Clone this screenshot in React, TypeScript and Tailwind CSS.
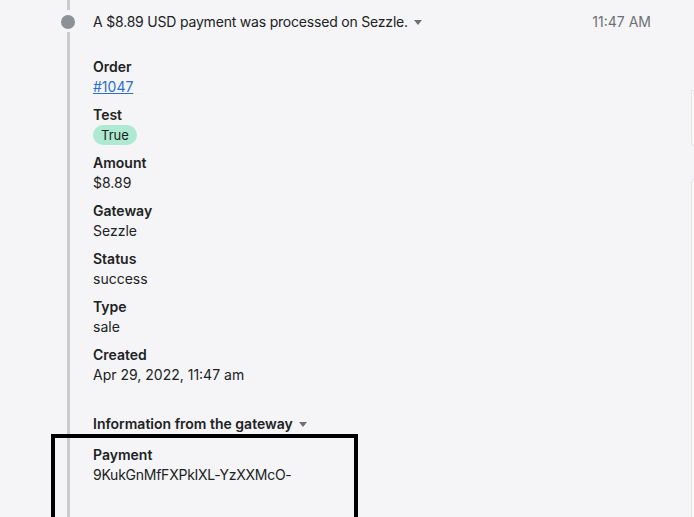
import React from 'react';

interface Field {
  label: string;
  value: React.ReactNode;
}

function Caret() {
  return (
    <svg width="8" height="5" viewBox="0 0 8 5" className="ml-[6px] inline-block">
      <path d="M0 0h8L4 5z" fill="#6d7175" />
    </svg>
  );
}

function App() {
  const fields: Field[] = [
    {
      label: 'Order',
      value: <a href="#" className="text-[#2c6ecb] underline">#1047</a>,
    },
    {
      label: 'Test',
      value: (
        <span className="inline-flex h-5 items-center rounded-full bg-[#aee9d1] px-2 text-[13px]">True</span>
      ),
    },
    { label: 'Amount', value: '$8.89' },
    { label: 'Gateway', value: 'Sezzle' },
    { label: 'Status', value: 'success' },
    { label: 'Type', value: 'sale' },
    { label: 'Created', value: 'Apr 29, 2022, 11:47 am' },
  ];

  return (
    <div
      className="relative flex h-[517px] w-[694px] overflow-hidden bg-[#f5f5f7] text-sm text-[#202223]"
      style={{ fontFamily: 'Inter, "Noto Sans", sans-serif' }}
    >
      {/* timeline rail */}
      <div className="ml-[61px] flex w-[14px] shrink-0 flex-col items-center">
        <div className="h-[10px] w-[3px] bg-[#c9cccf]" />
        <div className="mt-[5px] h-[14px] w-[14px] rounded-full bg-[#8c9196]" />
        <div className="mt-[3px] w-[3px] flex-1 bg-[#c9cccf]" />
      </div>

      <div className="ml-[18px] flex flex-1 flex-col pr-[43px] pt-3">
        <div className="flex items-center justify-between leading-5">
          <div className="flex items-center tracking-[-0.2px]">
            A $8.89 USD payment was processed on Sezzle.
            <Caret />
          </div>
          <span className="text-[#6d7175]">11:47 AM</span>
        </div>

        <div className="mt-[25px] flex flex-col gap-2">
          {fields.map((f) => (
            <div key={f.label} className="flex flex-col items-start leading-5">
              <span className="font-semibold">{f.label}</span>
              <span>{f.value}</span>
            </div>
          ))}
        </div>

        <div className="mt-[29px] flex items-center font-semibold leading-5">
          Information from the gateway
          <Caret />
        </div>

        <div className="mt-[11px] flex flex-col leading-5">
          <span className="font-semibold">Payment</span>
          <span className="tracking-[-0.25px]">9KukGnMfFXPkIXL-YzXXMcO-</span>
        </div>
      </div>

      {/* annotation box */}
      <div className="absolute left-[51px] top-[434px] h-[120px] w-[307px] border-[4px] border-black" />

      {/* cards peeking from the right */}
      <div className="absolute left-[691px] top-[90px] h-[58px] w-[20px] rounded-bl-md border border-[#e1e3e5] bg-[#f9f9fa]" />
      <div className="absolute left-[691px] top-[177px] h-[400px] w-[20px] rounded-tl-md border border-[#e1e3e5] bg-[#f9f9fa]" />
    </div>
  );
}

export default App;
